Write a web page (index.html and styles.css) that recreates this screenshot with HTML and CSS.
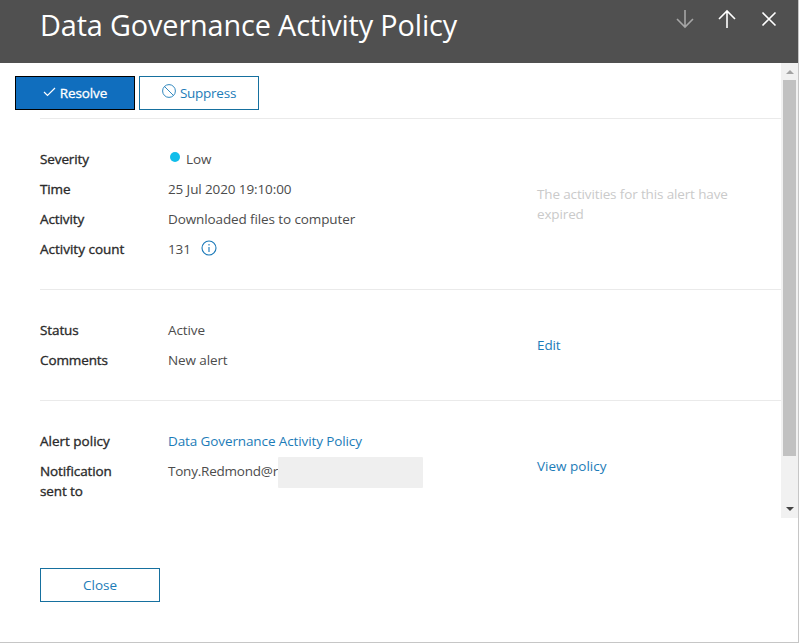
FILE: index.html
```html
<!DOCTYPE html>
<html lang="en">
<head>
<meta charset="utf-8">
<title>Data Governance Activity Policy</title>
<link rel="stylesheet" href="styles.css">
</head>
<body>
<div class="panel">
  <header class="header">
    <h1 class="title">Data Governance Activity Policy</h1>
    <div class="header-actions">
      <svg class="nav-icon dim" viewBox="0 0 18 20"><path d="M9 1v17M1 10l8 8 8-8"/></svg>
      <svg class="nav-icon" viewBox="0 0 18 20"><path d="M9 19V2M1 10l8-8 8 8"/></svg>
      <svg class="nav-icon cross" viewBox="0 0 16 20"><path d="M1.500 3.500l13 13M14.500 3.500l-13 13"/></svg>
    </div>
  </header>
  <div class="viewport">
    <main class="content">
      <div class="toolbar">
        <button class="btn primary"><svg class="check" viewBox="0 0 13 10"><path d="M1 5l3.500 3.500L12 1"/></svg><span class="t-resolve">Resolve</span></button>
        <button class="btn"><svg class="block" viewBox="0 0 14 14"><circle cx="7" cy="7" r="6.400"/><path d="M2.500 2.500l9 9"/></svg><span class="t-suppress">Suppress</span></button>
      </div>
      <section class="section">
        <dl class="details">
          <dt>Severity</dt><dd><span class="dot"></span>Low</dd>
          <dt>Time</dt><dd>25 Jul 2020 19:10:00</dd>
          <dt>Activity</dt><dd>Downloaded files to computer</dd>
          <dt class="wide">Activity count</dt><dd>131<svg class="info" viewBox="0 0 16 16"><circle cx="8" cy="8" r="7"/><path d="M8 7v5M8 4v1.500"/></svg></dd>
        </dl>
        <p class="side muted">The activities for this alert have expired</p>
      </section>
      <section class="section">
        <dl class="details">
          <dt>Status</dt><dd>Active</dd>
          <dt>Comments</dt><dd>New alert</dd>
        </dl>
        <p class="side"><a>Edit</a></p>
      </section>
      <section class="section">
        <dl class="details">
          <dt class="wide">Alert policy</dt><dd><a>Data Governance Activity Policy</a></dd>
          <dt>Notification sent to</dt><dd><span class="mail">Tony.Redmond@r</span><span class="redacted"></span></dd>
        </dl>
        <p class="side"><a class="wide">View policy</a></p>
      </section>
    </main>
    <div class="scrollbar">
      <svg class="arrow up" viewBox="0 0 8 4"><path d="M0 4l4-4 4 4z"/></svg>
      <div class="thumb"></div>
      <svg class="arrow down" viewBox="0 0 8 4"><path d="M0 0l4 4 4-4z"/></svg>
    </div>
  </div>
  <footer class="footer"><button class="btn"><span class="wide">Close</span></button></footer>
</div>
</body>
</html>
```
FILE: styles.css
```css
* { box-sizing: border-box; }
body {
  margin: 0;
  background: #fff;
  color: #4c4c4c;
  font: 13.5px/20px "Open Sans", "Noto Sans", sans-serif;
  letter-spacing: -0.11px;
}
.panel {
  width: 799px;
  height: 643px;
  border-right: 1px solid #c6c6c6;
  border-bottom: 1px solid #c6c6c6;
  overflow: hidden;
}
.header {
  height: 63px;
  padding: 0 21px 0 40px;
  background: #505050;
  display: flex;
  justify-content: space-between;
  align-items: flex-start;
}
.title {
  margin: 5px 0 0;
  font-size: 28.8px;
  letter-spacing: -0.12px;
  line-height: 40px;
  font-weight: 400;
  color: #fff;
  white-space: nowrap;
}
.header-actions { display: flex; gap: 24px; padding-top: 9px; }
.nav-icon { width: 18px; height: 20px; fill: none; stroke: #fff; stroke-width: 1.6; }
.nav-icon.cross { width: 16px; margin-left: 1px; }
.nav-icon.dim { stroke: #a6a6a6; }
.viewport { display: flex; height: 455px; overflow: hidden; }
.content { flex: 1; padding-left: 15px; }
.toolbar { display: flex; gap: 4px; height: 55px; padding-top: 13px; }
.btn {
  width: 120px;
  height: 34px;
  padding: 0;
  border: 1px solid #16709f;
  background: #fff;
  color: #1c7cb8;
  font: inherit;
  letter-spacing: inherit;
  display: flex;
  align-items: center;
  justify-content: center;
}
.btn svg { fill: none; stroke: currentColor; }
.btn.primary { background: #106ebe; border-color: #000; color: #fff; }
.t-resolve { -webkit-text-stroke: 0.3px currentColor; }
.check { width: 13px; height: 10px; margin: -3px 4px 0 0; stroke-width: 1.2; }
.block { width: 14px; height: 14px; margin: -4px 4px 0 0; stroke-width: 0.9; }
.t-suppress { letter-spacing: -0.25px; }
.section {
  margin-left: 25px;
  border-top: 1px solid #eaeaea;
  padding: 30px 0;
  display: flex;
  align-items: center;
}
.details {
  width: 497px;
  margin: 0;
  display: grid;
  grid-template-columns: 88px 1fr;
  column-gap: 40px;
  row-gap: 10px;
}
dt { color: #2b2b2b; -webkit-text-stroke: 0.35px currentColor; white-space: nowrap; }
dt:last-of-type { white-space: normal; }
.wide { letter-spacing: 0; }
dd { margin: 0; display: flex; height: 20px; white-space: nowrap; }
.dot { width: 10px; height: 10px; margin: 3px 6px 0 2px; border-radius: 50%; background: #10bdea; }
.info { width: 16px; height: 16px; margin: 1px 0 0 10px; fill: none; stroke: #1978b8; stroke-width: 1.1; }
.side { margin: 0; width: 210px; }
.muted { color: #cacaca; letter-spacing: -0.14px; }
a { color: #1c7cb8; }
.mail { width: 110px; letter-spacing: -0.22px; }
.redacted { width: 145px; height: 31px; margin-top: -4px; background: #efefef; border-radius: 1px; z-index: 1; }
.scrollbar {
  width: 17px;
  background: #f1f1f1;
  display: flex;
  flex-direction: column;
  align-items: center;
}
.arrow { width: 8px; height: 4px; margin-top: 7px; fill: #a3a3a3; }
.arrow.down { margin: auto 0 7px; fill: #444; }
.thumb { width: 13px; height: 376px; margin-top: 6px; background: #c1c1c1; }
.footer { padding: 50px 0 0 40px; }
```
